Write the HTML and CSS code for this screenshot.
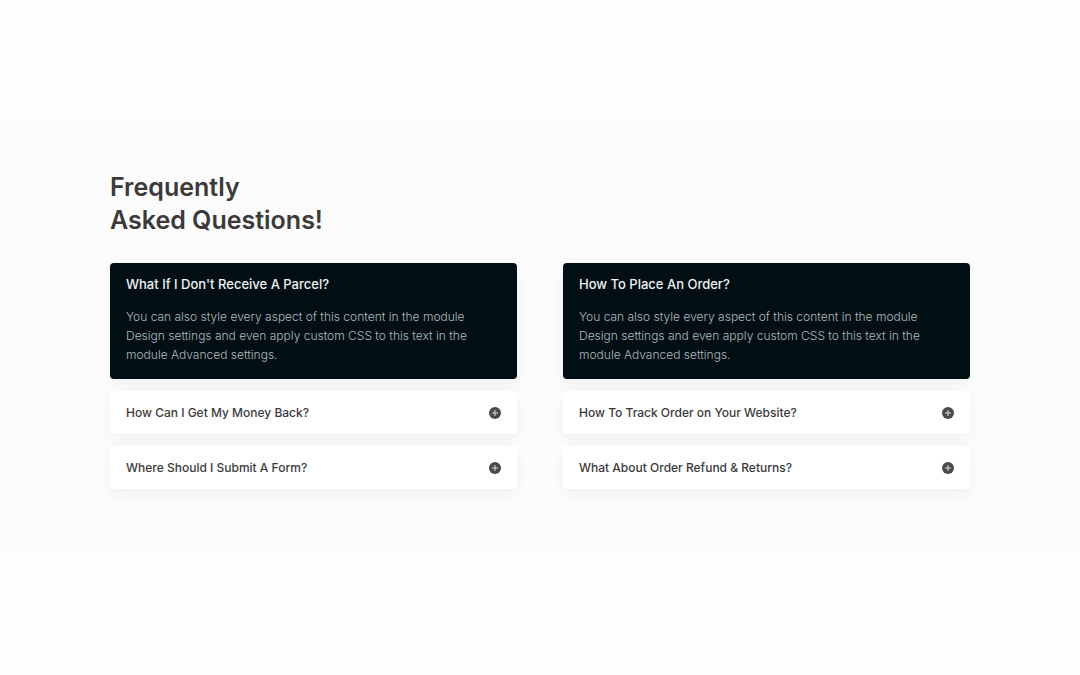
FILE: index.html
```html
<!DOCTYPE html>
<html lang="en">
<head>
<meta charset="utf-8">
<meta name="viewport" content="width=device-width, initial-scale=1">
<title>Frequently Asked Questions</title>
<link rel="stylesheet" href="styles.css">
</head>
<body>
<main class="faq">
  <div class="container">
    <h1 class="title">Frequently<br>Asked Questions!</h1>
    <div class="columns">
      <section class="column">
        <article class="card open">
          <h2 class="heading"><button class="toggle" type="button" aria-expanded="true">What If I Don't Receive A Parcel?</button></h2>
          <p class="answer">You can also style every aspect of this content in the module Design settings and even apply custom CSS to this text in the module Advanced settings.</p>
        </article>
        <article class="card">
          <h2 class="heading"><button class="toggle" type="button" aria-expanded="false">How Can I Get My Money Back?<svg class="plus" viewBox="0 0 12 12" aria-hidden="true"><circle cx="6" cy="6" r="6"/><path d="M6 3v6M3 6h6"/></svg></button></h2>
        </article>
        <article class="card">
          <h2 class="heading"><button class="toggle" type="button" aria-expanded="false">Where Should I Submit A Form?<svg class="plus" viewBox="0 0 12 12" aria-hidden="true"><circle cx="6" cy="6" r="6"/><path d="M6 3v6M3 6h6"/></svg></button></h2>
        </article>
      </section>
      <section class="column">
        <article class="card open">
          <h2 class="heading"><button class="toggle" type="button" aria-expanded="true">How To Place An Order?</button></h2>
          <p class="answer">You can also style every aspect of this content in the module Design settings and even apply custom CSS to this text in the module Advanced settings.</p>
        </article>
        <article class="card">
          <h2 class="heading"><button class="toggle" type="button" aria-expanded="false">How To Track Order on Your Website?<svg class="plus" viewBox="0 0 12 12" aria-hidden="true"><circle cx="6" cy="6" r="6"/><path d="M6 3v6M3 6h6"/></svg></button></h2>
        </article>
        <article class="card">
          <h2 class="heading"><button class="toggle" type="button" aria-expanded="false">What About Order Refund &amp; Returns?<svg class="plus" viewBox="0 0 12 12" aria-hidden="true"><circle cx="6" cy="6" r="6"/><path d="M6 3v6M3 6h6"/></svg></button></h2>
        </article>
      </section>
    </div>
  </div>
</main>
</body>
</html>
```
FILE: styles.css
```css
* { box-sizing: border-box; }
body {
  margin: 0;
  min-height: 100vh;
  padding: 120px 0;
  background: #fefefe;
  font-family: Inter, sans-serif;
  color: #3a3a3a;
}
.faq { background: #fcfcfc; padding: 51px 110px 65px; }
.container { max-width: 1080px; margin: 0 auto; }
.title {
  margin: 0 0 26px;
  font-size: 25px;
  line-height: 33px;
  font-weight: 600;
}
.columns { display: grid; grid-template-columns: 1fr 1fr; gap: 46px; }
.column { display: flex; flex-direction: column; gap: 12px; }
.card {
  padding: 12px 16px;
  border-radius: 4px;
  background: #fff;
  box-shadow: 0 6px 16px rgba(0, 0, 0, 0.05);
}
.heading { margin: 0; }
.toggle {
  display: flex;
  justify-content: space-between;
  align-items: center;
  width: 100%;
  padding: 0;
  border: 0;
  background: none;
  color: inherit;
  font: 500 12px/19px Inter, sans-serif;
  text-align: left;
  cursor: pointer;
}
.plus { width: 12px; height: 12px; }
.plus circle { fill: #4a4a4a; }
.plus path { stroke: #ddd; stroke-width: 1; }
.open { background: #000f14; color: #f0f2f2; }
.open .toggle { font-size: 13px; }
.answer {
  margin: 13px 0 3px;
  font-size: 12px;
  line-height: 19px;
  font-weight: 300;
  color: #b3babd;
}
```
